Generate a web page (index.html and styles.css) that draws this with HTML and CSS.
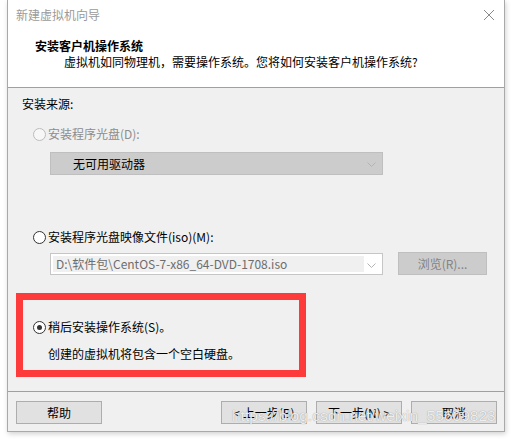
FILE: index.html
```html
<!DOCTYPE html>
<html lang="zh-CN">
<head>
<meta charset="utf-8">
<title>新建虚拟机向导</title>
<link rel="stylesheet" href="styles.css">
</head>
<body>
<div class="window">
  <div class="header">
    <div class="titlebar">
      <span class="title">新建虚拟机向导</span>
      <svg class="close" width="12" height="12" viewBox="0 0 12 12"><path d="M1 1 L11 11 M11 1 L1 11" stroke="#8a8a8a" stroke-width="1" fill="none"/></svg>
    </div>
    <div class="heading">安装客户机操作系统</div>
    <div class="subtitle">虚拟机如同物理机，需要操作系统。您将如何安装客户机操作系统?</div>
  </div>
  <div class="content">
    <div class="section-label">安装来源:</div>
    <div class="radio-row row1 disabled"><span class="radio"></span><span>安装程序光盘(D):</span></div>
    <div class="combo combo-disabled">
      <span class="combo-text">无可用驱动器</span>
      <svg class="chev" width="9" height="5" viewBox="0 0 9 5"><path d="M0.5 0.5 L4.5 4.5 L8.5 0.5" stroke="#b4b4b4" fill="none"/></svg>
    </div>
    <div class="radio-row row2"><span class="radio"></span><span>安装程序光盘映像文件(iso)(M):</span></div>
    <div class="iso-row">
      <div class="combo combo-iso">
        <span class="iso-field">D:\软件包\CentOS-7-x86_64-DVD-1708.iso</span>
        <svg class="chev" width="9" height="5" viewBox="0 0 9 5"><path d="M0.5 0.5 L4.5 4.5 L8.5 0.5" stroke="#b4b4b4" fill="none"/></svg>
      </div>
      <div class="btn btn-disabled">浏览(R)...</div>
    </div>
    <div class="highlight">
      <div class="radio-row row3"><span class="radio checked"></span><span>稍后安装操作系统(S)。</span></div>
      <div class="note">创建的虚拟机将包含一个空白硬盘。</div>
    </div>
  </div>
  <div class="footer">
    <div class="btn">帮助</div>
    <div class="spacer"></div>
    <div class="btn">&lt; 上一步(B)</div>
    <div class="btn">下一步(N) &gt;</div>
    <div class="btn">取消</div>
    <div class="watermark">https://blog.csdn.net/weixin_55609823</div>
  </div>
</div>
</body>
</html>
```

FILE: styles.css
```css
html, body {
  margin: 0;
  padding: 0;
  background: #ffffff;
}
body {
  font-family: "Noto Sans CJK SC", "Noto Sans", sans-serif;
  font-size: 12px;
  color: #000;
  width: 513px;
  height: 440px;
  overflow: hidden;
}
.window {
  margin-left: 7px;
  width: 496px;
  height: 431px;
  border: 1px solid #a9a9a9;
  border-top: none;
  background: #f0f0f0;
  box-shadow: 1px 2px 5px rgba(0,0,0,0.18);
  display: flex;
  flex-direction: column;
}
.header {
  background: #ffffff;
  height: 87px;
  border-bottom: 1px solid #a0a0a0;
  box-sizing: content-box;
}
.titlebar {
  height: 30px;
  display: flex;
  align-items: center;
  justify-content: space-between;
  padding: 0 9px 0 8px;
}
.title {
  color: #9a9a9a;
  line-height: 16px;
}
.close {
  display: block;
}
.heading {
  margin-top: 8px;
  padding-left: 27px;
  font-weight: bold;
  line-height: 16px;
}
.subtitle {
  padding-left: 56px;
  line-height: 16px;
}
.content {
  height: 304px;
  padding: 8px 0 0 8px;
  box-sizing: border-box;
  border-bottom: 1px solid #a0a0a0;
}
.section-label {
  line-height: 16px;
  padding-left: 6px;
}
.radio-row {
  display: flex;
  align-items: center;
  gap: 2px;
  line-height: 16px;
  padding-left: 17px;
}
.radio {
  width: 11px;
  height: 11px;
  border: 1px solid #333;
  border-radius: 50%;
  background: #fff;
  position: relative;
  flex: none;
}
.radio.checked::after {
  content: "";
  position: absolute;
  left: 3px;
  top: 3px;
  width: 5px;
  height: 5px;
  border-radius: 50%;
  background: #333;
}
.disabled {
  color: #8d8d8d;
}
.disabled .radio {
  border-color: #bcbcbc;
  background: #f7f7f7;
}
.row1 {
  margin-top: 14px;
}
.combo {
  width: 333px;
  height: 23px;
  box-sizing: border-box;
  margin-left: 34px;
  display: flex;
  align-items: center;
  position: relative;
}
.combo-disabled {
  margin-top: 10px;
  background: #cccccc;
  border: 1px solid #bfbfbf;
}
.combo-text {
  padding-left: 22px;
  line-height: 16px;
}
.chev {
  position: absolute;
  right: 6px;
  top: 9px;
}
.row2 {
  margin-top: 54px;
}
.iso-row {
  display: flex;
  align-items: center;
  margin-top: 7px;
  gap: 15px;
}
.combo-iso {
  height: 22px;
  background: #ffffff;
  border: 1px solid #c6c6c6;
  padding: 2px;
}
.iso-field {
  background: #f0f0f0;
  color: #6d6d6d;
  width: 311px;
  height: 16px;
  line-height: 16px;
  padding-left: 3px;
  box-sizing: border-box;
  white-space: nowrap;
  font-family: "Noto Sans CJK SC", sans-serif;
}
.btn {
  width: 86px;
  height: 23px;
  box-sizing: border-box;
  border: 1px solid #adadad;
  background: #e1e1e1;
  display: flex;
  align-items: center;
  justify-content: center;
  line-height: 16px;
}
.btn-disabled {
  background: #cccccc;
  border-color: #bfbfbf;
  color: #838383;
  width: 89px;
}
.highlight {
  margin-top: 18px;
  width: 290px;
  height: 84px;
  box-sizing: border-box;
  border: 7px solid #fd3b3b;
  padding-top: 19px;
}
.highlight .radio-row {
  padding-left: 10px;
}
.note {
  margin-top: 11px;
  padding-left: 25px;
  line-height: 16px;
}
.footer {
  flex: 1;
  display: flex;
  align-items: flex-start;
  padding: 9px 0 0 8px;
  gap: 9px;
  position: relative;
}
.spacer {
  width: 101px;
}
.watermark {
  position: absolute;
  left: 224px;
  top: 15px;
  font-family: "Liberation Sans", Arial, sans-serif;
  font-size: 15.5px;
  color: rgba(255,255,255,0.85);
  text-shadow: 0 0 1px rgba(110,110,110,0.8);
  white-space: nowrap;
}
```
